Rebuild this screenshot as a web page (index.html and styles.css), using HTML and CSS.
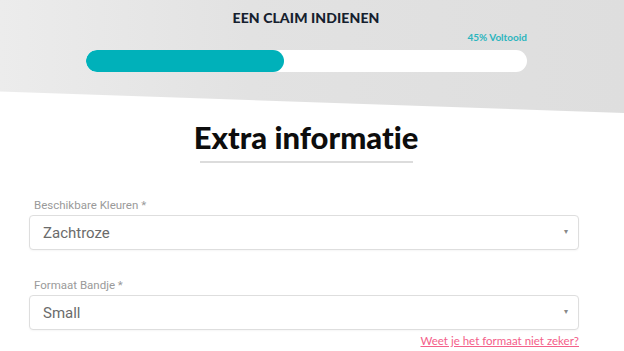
FILE: index.html
```html
<!DOCTYPE html>
<html lang="nl">
<head>
    <meta charset="UTF-8">
    <meta name="viewport" content="width=device-width, initial-scale=1.0">
    <title>Een claim indienen</title>
    <link rel="stylesheet" href="styles.css">
</head>
<body>

<div class="page">
    <div class="claim-header">
        <h1>EEN CLAIM INDIENEN</h1>
        <div class="progress-wrap">
            <div class="progress-label">45% Voltooid</div>
            <div class="progress-bar">
                <div class="progress-fill" style="width: 45%;"></div>
            </div>
        </div>
    </div>

    <div class="form-container">
        <h2>Extra informatie</h2>
        <form id="claimForm">
            <div class="form-group">
                <label for="kleur">Beschikbare Kleuren *</label>
                <div class="select-box">
                    <select id="kleur" name="kleur">
                        <option>Zachtroze</option>
                    </select>
                    <span class="caret">&#9662;</span>
                </div>
            </div>
            <div class="form-group">
                <label for="formaat">Formaat Bandje *</label>
                <div class="select-box">
                    <select id="formaat" name="formaat">
                        <option>Small</option>
                    </select>
                    <span class="caret">&#9662;</span>
                </div>
                <a href="#" class="help-link">Weet je het formaat niet zeker?</a>
            </div>
        </form>
    </div>
</div>

</body>
</html>
```

FILE: styles.css
```css
body {
    margin: 0;
    padding: 0;
    background-color: #ffffff;
    font-family: 'Lato', 'Helvetica Neue', Arial, sans-serif;
    color: #333;
    overflow: hidden;
    font-variant-ligatures: none;
}

.page {
    width: 612px;
}

.claim-header {
    width: 624px;
    height: 113px;
    box-sizing: border-box;
    padding-top: 10px;
    background: linear-gradient(90deg, #ececec 0%, #e2e2e2 40%, #dedede 100%);
    clip-path: polygon(0 0, 100% 0, 100% 100%, 0 81%);
}

.claim-header h1 {
    width: 612px;
    margin: 0;
    text-align: center;
    font-size: 14px;
    font-weight: 900;
    letter-spacing: 0.1px;
    color: #15202e;
    line-height: 16px;
}

.progress-wrap {
    width: 441px;
    margin: 5px 0 0 86px;
}

.progress-label {
    text-align: right;
    font-size: 10px;
    font-weight: 700;
    color: #2cb5be;
    line-height: 12px;
    margin-bottom: 7px;
}

.progress-bar {
    height: 22px;
    border-radius: 11px;
    background-color: #ffffff;
    overflow: hidden;
}

.progress-fill {
    height: 100%;
    border-radius: 11px;
    background-color: #00b1ba;
}

.form-container {
    width: 550px;
    margin-left: 29px;
}

.form-container h2 {
    position: relative;
    width: 240px;
    margin: 6px 0 0 157px;
    padding-bottom: 8px;
    text-align: center;
    font-size: 31px;
    font-weight: 900;
    color: #0d0d0d;
    line-height: 36px;
    white-space: nowrap;
}

.form-container h2::after {
    content: "";
    position: absolute;
    left: 14px;
    bottom: 0;
    width: 213px;
    height: 2px;
    background-color: #dcdcdc;
}

#claimForm {
    margin-top: 35px;
}

.form-group {
    margin-bottom: 28px;
}

.form-group label {
    display: block;
    margin-left: 5px;
    margin-bottom: 3px;
    font-family: 'Roboto', Arial, sans-serif;
    font-size: 11.5px;
    color: #9a9a9a;
    line-height: 14px;
}

.select-box {
    position: relative;
}

.select-box select {
    width: 100%;
    height: 35px;
    padding: 0 13px;
    border: 1px solid #dedede;
    border-radius: 4px;
    background-color: #ffffff;
    box-shadow: 0 1px 2px rgba(0, 0, 0, 0.04);
    font-family: 'Roboto', Arial, sans-serif;
    font-size: 15px;
    color: #6b6b6b;
    appearance: none;
    -webkit-appearance: none;
    outline: none;
}

.caret {
    position: absolute;
    right: 11px;
    top: 11px;
    font-size: 8px;
    color: #888;
}

.help-link {
    display: block;
    margin-top: 4px;
    text-align: right;
    font-family: 'Lato', Arial, sans-serif;
    font-size: 11.5px;
    line-height: 14px;
    color: #f4608a;
}
```
